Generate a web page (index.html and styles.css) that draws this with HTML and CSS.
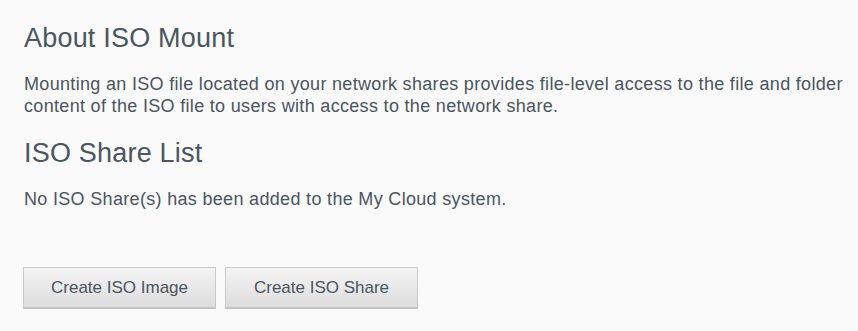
FILE: index.html
```html
<!DOCTYPE html>
<html lang="en">
<head>
  <meta charset="UTF-8" />
  <title>ISO Mount</title>
  <link rel="stylesheet" href="styles.css">
</head>
<body>
  <section class="panel">
    <h2 class="panel-title">About ISO Mount</h2>
    <p class="panel-text">Mounting an ISO file located on your network shares provides file-level access to the file and folder content of the ISO file to users with access to the network share.</p>

    <h2 class="panel-title">ISO Share List</h2>
    <p class="panel-text">No ISO Share(s) has been added to the My Cloud system.</p>

    <div class="actions">
      <button class="btn" type="button">Create ISO Image</button>
      <button class="btn" type="button">Create ISO Share</button>
    </div>
  </section>
</body>
</html>
```

FILE: styles.css
```css
*, *::before, *::after {
  box-sizing: border-box;
}
body {
  margin: 0;
  background-color: #fafafa;
  color: #4a5560;
  font-family: 'Liberation Sans', Arial, sans-serif;
}
.panel {
  padding: 23px 10px 0 24px;
}
.panel-title {
  margin: 0 0 19px;
  font-size: 27px;
  font-weight: 400;
  line-height: 31px;
  letter-spacing: 0.2px;
}
.panel-text {
  margin: 0 0 21px;
  font-size: 18px;
  line-height: 22px;
  letter-spacing: 0.32px;
}
.actions {
  display: flex;
  gap: 9px;
  margin-top: 57px;
  margin-left: -1px;
}
.btn {
  width: 193px;
  height: 42px;
  padding: 0;
  font-family: inherit;
  font-size: 17px;
  color: #4a5560;
  background: linear-gradient(#f4f4f4, #dddddd);
  border: 1px solid #cacaca;
  border-bottom: 2px solid #c2c2c2;
  border-radius: 0;
  cursor: pointer;
}
.btn:hover {
  background: linear-gradient(#ffffff, #e6e6e6);
}
```
